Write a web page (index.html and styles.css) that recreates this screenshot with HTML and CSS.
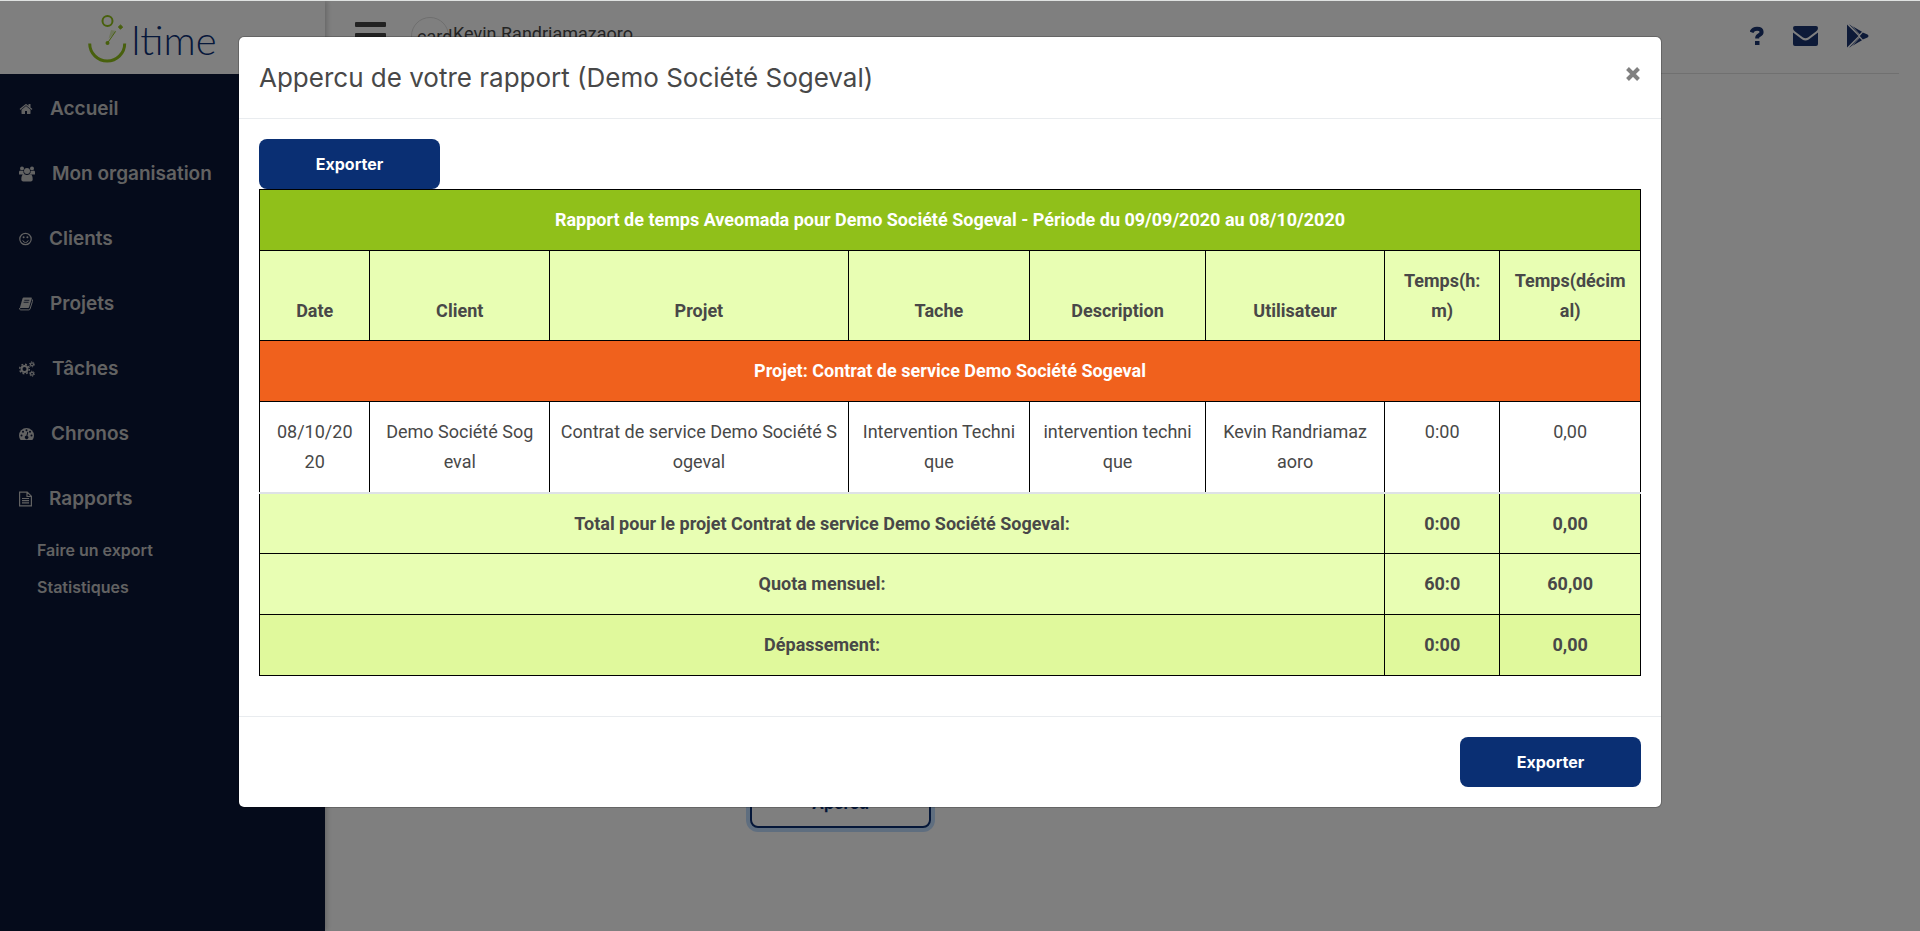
FILE: index.html
```html
<!DOCTYPE html>
<html lang="fr">
<head>
<meta charset="utf-8">
<title>Oltime - Rapports</title>
<link rel="stylesheet" href="styles.css">
</head>
<body>
<div class="app">
  <aside class="sidebar">
    <a class="brand" href="#">
      <svg class="brand-mark" width="40" height="50" viewBox="0 0 40 50" fill="none" stroke="#90c01a" aria-hidden="true">
        <circle cx="19.500" cy="7" r="5" stroke-width="2"/>
        <path d="M1.700 29.500a17.500 17.500 0 0 0 35 0" stroke-width="3"/>
        <path d="M19.500 29L27.500 17.500" stroke-width="1"/>
        <path d="M20.500 25L23 16l5.500 1z" fill="#90c01a" stroke="none" opacity=".3"/>
        <circle cx="19.500" cy="29" r="2" fill="#90c01a" stroke="none"/>
        <path d="M32.500 11l2.200 2-2.200 2.200-2.200-2.200z" fill="#90c01a" stroke-width="1"/>
      </svg>
      <span class="brand-name">ltime</span>
    </a>
    <nav class="menu">
      <a class="menu-item" href="#">
        <svg width="14" height="14" viewBox="64 0 1664 1792" fill="currentColor"><path d="M1472 992v480q0 26-19 45t-45 19h-384v-384h-256v384h-384q-26 0-45-19t-19-45v-480q0-1 .5-3t.5-3l575-474 575 474q1 2 1 6zm223-69l-62 74q-8 9-21 11h-3q-13 0-21-7l-692-577-692 577q-12 8-24 7-13-2-21-11l-62-74q-8-10-7-23.500t11-21.500l719-599q32-26 76-26t76 26l244 204v-195q0-14 9-23t23-9h192q14 0 23 9t9 23v408l219 182q10 8 11 21.500t-7 23.500z"/></svg>
        <span>Accueil</span></a>
      <a class="menu-item" href="#">
        <svg width="16" height="16" viewBox="0 0 16 16" fill="currentColor"><circle cx="3" cy="2.500" r="2"/><circle cx="13" cy="2.500" r="2"/><circle cx="8" cy="5" r="3"/><path d="M0 8.500V6q0-1.500 1.200-1.500 1.500 1 3.300.3Q4 7 5.500 8L4 8.600zM16 8.500V6q0-1.500-1.200-1.500-1.500 1-3.300.3.500 2.200-1 3.200l1.500.6zM2.300 13.500q0-5.500 3-5.500 2.700 2 5.400 0 3 0 3 5.500 0 2-2 2H4.300q-2 0-2-2z"/></svg>
        <span>Mon organisation</span></a>
      <a class="menu-item" href="#">
        <svg width="13" height="14" viewBox="0 0 13 14" fill="none" stroke="currentColor"><circle cx="6.500" cy="7" r="5.700" stroke-width="1.200"/><path d="M3.700 8.300q.8 2.200 2.800 2.200t2.800-2.200" stroke-width="1"/><circle cx="4.600" cy="5.200" r="1" fill="currentColor" stroke="none"/><circle cx="8.400" cy="5.200" r="1" fill="currentColor" stroke="none"/></svg>
        <span>Clients</span></a>
      <a class="menu-item" href="#">
        <svg width="14" height="14" viewBox="0 0 14 14" fill="none" stroke="currentColor"><path d="M4.700.6h7.500q.9 0 .6.900l-2.700 8.700q-.2.700-1 .7H.8L3.500 1.500q.3-.9 1.200-.9z" fill="currentColor" stroke="none"/><path d="M5.300 3.300h5M4.600 5.300h5" stroke="#0a1637" stroke-width=".8"/><path d="M13.400 2.500v2L11 12q-.3.900-1.200.9H1.700Q.4 12.900.6 11" stroke-width="1"/></svg>
        <span>Projets</span></a>
      <a class="menu-item" href="#">
        <svg width="16" height="16" viewBox="0 0 16 16" fill="none" stroke="currentColor"><circle cx="5.500" cy="8" r="3" stroke-width="2"/><circle cx="5.500" cy="8" r="4.800" stroke-width="1.500" stroke-dasharray="1.880"/><circle cx="13" cy="3.300" r="1.500" stroke-width="1.200"/><circle cx="13" cy="3.300" r="2.500" stroke-width="1" stroke-dasharray="1.300"/><circle cx="13" cy="12.700" r="1.500" stroke-width="1.200"/><circle cx="13" cy="12.700" r="2.500" stroke-width="1" stroke-dasharray="1.300"/></svg>
        <span>Tâches</span></a>
      <a class="menu-item" href="#">
        <svg width="15" height="14" viewBox="0 0 15 14" fill="#0a1637"><path d="M1.600 13Q0 11 0 8.500a7.500 7.500 0 0 1 15 0q0 2.500-1.600 4.500z" fill="currentColor"/><circle cx="2.500" cy="8.500" r="1"/><circle cx="4" cy="4.800" r="1"/><circle cx="7.500" cy="3.200" r="1"/><circle cx="11" cy="4.800" r="1"/><circle cx="12.500" cy="8.500" r="1"/><path d="M8.300 4.800l1 .3-.9 3.800a1.700 1.700 0 1 1-1-.2z"/></svg>
        <span>Chronos</span></a>
      <a class="menu-item" href="#">
        <svg width="13" height="16" viewBox="0 0 13 16" fill="none" stroke="currentColor" stroke-width="1.200"><path d="M.6 1.100h7.600l4.200 4.200v9.600H.6zM8 1.100v4.400h4.400M3 7.500h7M3 9.700h7M3 11.900h7"/></svg>
        <span>Rapports</span></a>
      <div class="submenu">
        <a href="#">Faire un export</a>
        <a href="#">Statistiques</a>
      </div>
    </nav>
  </aside>

  <main class="main">
    <header class="topbar">
      <button class="burger" type="button" aria-label="Menu"><i></i><i></i><i></i></button>
      <span class="avatar">card</span>
      <span class="user-name">Kevin Randriamazaoro</span>
      <nav class="tools">
        <a href="#" aria-label="Aide"><svg width="14" height="20" viewBox="0 0 14 20" fill="none" stroke="currentColor"><path d="M1.500 6.300Q3 2.700 7 2.700q4.600 0 4.600 3.200 0 1.800-2.200 3-2.200 1.200-2.200 2.800v.8" stroke-width="4"/><path d="M5 15h4.500v4H5z" fill="currentColor" stroke="none"/></svg></a>
        <a href="#" aria-label="Messages"><svg width="25" height="20" viewBox="0 0 25 20" fill="currentColor"><path d="M2 0h21q2 0 2 2 0 2-2 3.500l-8 6q-2.500 1.600-5 0l-8-6Q0 4 0 2q0-2 2-2zM0 6.500l9.300 7q3.200 2 6.400 0l9.300-7V18q0 2-2 2H2q-2 0-2-2z"/></svg></a>
        <a href="#" aria-label="Google Play"><svg width="22" height="24" viewBox="0 0 22 24" fill="currentColor"><path d="M0 .5L11.500 12 0 23.500zM2 .3l13 7.400-3 3zM2 23.700l13-7.400-3-3zM15.800 8.500l-3 3.500 3 3.500 4.700-2q2-1.500 0-3z"/><path d="M4 1l9 10M4 23l9-10" stroke="#fff" stroke-width=".8"/></svg></a>
      </nav>
    </header>
    <section class="content">
      <button class="btn btn-outline" type="button">Apercu</button>
    </section>
  </main>
</div>

<div class="overlay">
  <div class="modal" role="dialog" aria-labelledby="modal-title">
    <div class="modal-header">
      <h1 class="modal-title" id="modal-title">Appercu de votre rapport (Demo Société Sogeval)</h1>
      <button class="close" type="button" aria-label="Fermer"><svg width="14" height="14" viewBox="0 0 14 14" stroke="currentColor" stroke-width="4"><path d="M1.500 1.500l11 11M12.500 1.500l-11 11"/></svg></button>
    </div>
    <div class="modal-body">
      <button class="btn" type="button">Exporter</button>
      <table class="report">
        <colgroup><col class="c-date"><col class="c-client"><col class="c-project"><col class="c-task"><col class="c-desc"><col class="c-user"><col class="c-hm"><col class="c-dec"></colgroup>
        <thead>
          <tr class="row-title"><th colspan="8">Rapport de temps Aveomada pour Demo Société Sogeval - Période du 09/09/2020 au 08/10/2020</th></tr>
          <tr class="row-light row-tight"><th>Date</th><th>Client</th><th>Projet</th><th>Tache</th><th>Description</th><th>Utilisateur</th><th>Temps(h:m)</th><th>Temps(décimal)</th></tr>
        </thead>
        <tbody>
          <tr class="row-project"><th colspan="8">Projet: Contrat de service Demo Société Sogeval</th></tr>
          <tr class="row-entry"><td>08/10/2020</td><td>Demo Société Sogeval</td><td class="cell-project">Contrat de service Demo Société&nbsp;Sogeval</td><td>Intervention Technique</td><td>intervention technique</td><td>Kevin Randriamazaoro</td><td>0:00</td><td>0,00</td></tr>
          <tr class="row-light row-tight"><th colspan="6">Total pour le projet Contrat de service Demo Société Sogeval:</th><th>0:00</th><th>0,00</th></tr>
          <tr class="row-light"><th colspan="6">Quota mensuel:</th><th>60:0</th><th>60,00</th></tr>
          <tr class="row-over"><th colspan="6">Dépassement:</th><th>0:00</th><th>0,00</th></tr>
        </tbody>
      </table>
    </div>
    <div class="modal-footer">
      <button class="btn" type="button">Exporter</button>
    </div>
  </div>
</div>
</body>
</html>
```
FILE: styles.css
```css
* { box-sizing: border-box; }

body {
  margin: 0;
  border-top: 1px solid #dfe2e1;
  font: 18px/30px Roboto, sans-serif;
  color: #484848;
  background: #fff;
  overflow: hidden;
}

a { color: inherit; text-decoration: none; }
button { font: inherit; color: inherit; border: 0; padding: 0; background: none; cursor: pointer; }
svg { display: block; flex: none; }

.app { display: flex; min-height: calc(100vh - 1px); }

.sidebar {
  width: 325px;
  flex: none;
  background: #0a1637;
  box-shadow: 2px 0 5px rgba(0, 0, 0, .2);
}

.brand {
  display: flex;
  justify-content: center;
  height: 73px;
  padding: 13px 20px 0 0;
  background: #fff;
}
.brand-name {
  margin-left: 3px;
  font: 300 40px/52px Lato, sans-serif;
  color: #0d3077;
}

.menu { display: flex; flex-direction: column; padding-top: 2px; font-family: Inter, sans-serif; font-weight: 600; color: #c4c4c4; }
.menu-item { display: flex; align-items: center; gap: 17px; height: 65px; padding-left: 19px; font-size: 19px; }
.submenu { display: flex; flex-direction: column; padding: 1px 0 0 37px; font-size: 16px; line-height: 37px; }

.main { flex: 1; padding-right: 21px; }

.topbar {
  display: flex;
  height: 73px;
  padding: 16px 10px 0 30px;
  border-bottom: 1px solid #e0e0e0;
}
.burger { display: flex; flex-direction: column; gap: 6px; width: 31px; margin: 5px 25px 0 0; }
.burger i { height: 5px; border-radius: 1px; background: #444; }
.avatar {
  width: 38px;
  height: 38px;
  border: 1px solid #ddd;
  border-radius: 50%;
  padding-left: 5px;
  white-space: nowrap;
  line-height: 38px;
}
.user-name { margin-left: 4px; line-height: 34px; }
.tools { display: flex; align-items: center; gap: 29px; height: 38px; margin-left: auto; padding-right: 20px; color: #1b3470; }

.content { display: flex; padding: 704px 0 0 425px; }

.btn {
  width: 181px;
  height: 50px;
  border-radius: 8px;
  background: #0a2f73;
  color: #fff;
  font: 700 16px/24px Inter, sans-serif;
}
.btn-outline {
  border: 2px solid #0a2f73;
  background: #fff;
  color: #0a2f73;
  box-shadow: 0 0 0 4px #bfdcff;
}

.overlay { position: absolute; inset: 1px 0 0; background: rgba(0, 0, 0, .5); }

.modal {
  margin: 35px 258px 0 238px;
  border: 1px solid rgba(0, 0, 0, .2);
  border-radius: 6px;
  background: #fff;
  background-clip: padding-box;
}
.modal-header { display: flex; justify-content: space-between; padding: 23px 20px 22px; border-bottom: 1px solid #e9ecef; }
.modal-title { margin: 0; font: 400 26px/36px Inter, sans-serif; }
.close { height: 14px; margin: 7px 1px 0; color: #808080; }
.modal-body { display: flex; flex-direction: column; align-items: flex-start; padding: 20px 20px 40px; }
.modal-footer { display: flex; justify-content: flex-end; padding: 20px; border-top: 1px solid #e9ecef; }

.report { width: 100%; table-layout: fixed; border-collapse: collapse; text-align: center; word-break: break-all; }
.report th, .report td { padding: 15px 13px; border: 1px solid #000; }
.report th { font-weight: 700; vertical-align: bottom; }
.report td { vertical-align: top; }
.report .row-tight th { padding-bottom: 14px; }
.report .cell-project { padding-left: 9px; padding-right: 9px; }
.c-date { width: 8%; }
.c-client { width: 13%; }
.c-project { width: 21.640%; }
.c-task { width: 13.120%; }
.c-desc { width: 12.750%; }
.c-user { width: 12.970%; }
.c-hm { width: 8.330%; }
.c-dec { width: 10.190%; }
.row-title { background: #90c01a; color: #fff; }
.row-light { background: #e8feb3; }
.row-project { background: #f0611d; color: #fff; }
.row-over { background: #e0f99c; }
.report .row-entry td { border-bottom: 2px solid #dee2e6; }
```
